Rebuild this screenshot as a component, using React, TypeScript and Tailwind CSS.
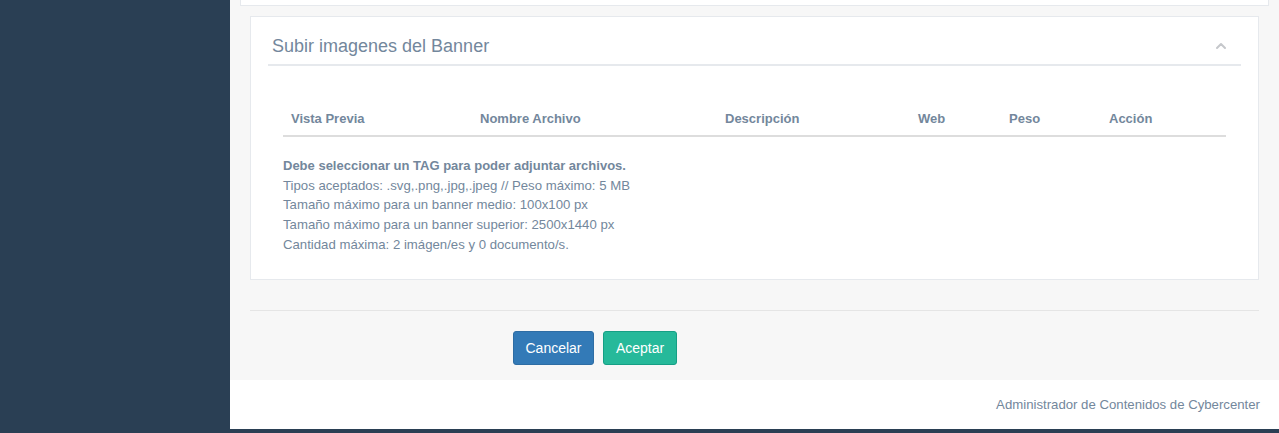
import { ChevronUp } from "lucide-react";

const columns = [
  { label: "Vista Previa", w: "w-[189px]" },
  { label: "Nombre Archivo", w: "w-[245px]" },
  { label: "Descripción", w: "w-[193px]" },
  { label: "Web", w: "w-[91px]" },
  { label: "Peso", w: "w-[100px]" },
  { label: "Acción", w: "w-[125px]" },
];

export default function App() {
  return (
    <div
      className="flex h-[433px] w-full bg-[#2A3F54] text-[#73879C]"
      style={{ fontFamily: '"Liberation Sans", Arial, sans-serif' }}
    >
      {/* sidebar */}
      <aside className="w-[230px] shrink-0" />

      <main className="flex h-[429px] flex-1 flex-col">
        <div className="h-[380px] bg-[#F7F7F7] pl-[10px] pr-[11px]">
          {/* tail of the card above */}
          <div className="h-[6px] border border-t-0 border-[#E6E9ED] bg-white" />

          <div className="px-[10px] pt-[10px]">
            <section className="h-[264px] border border-[#E6E9ED] bg-white px-[17px] pt-[10px]">
              <div className="flex h-[39px] items-center justify-between border-b-2 border-[#E6E9ED] pl-[4px] pr-[12px]">
                <h2 className="text-[18px] leading-[24px] text-[#73879C]">Subir imagenes del Banner</h2>
                <ChevronUp className="h-[16px] w-[16px] text-[#C5C7CB]" strokeWidth={3} />
              </div>

              <div className="px-[15px] pt-[36px]">
                <div className="flex h-[35px] items-center border-b-2 border-[#DDDDDD]">
                  {columns.map((c) => (
                    <div key={c.label} className={`${c.w} px-[8px] text-[13px] font-bold`}>
                      {c.label}
                    </div>
                  ))}
                </div>

                <div className="pt-[19px] text-[13.2px] leading-[19.7px]">
                  <p className="text-[13px] font-bold">Debe seleccionar un TAG para poder adjuntar archivos.</p>
                  <p>Tipos aceptados: .svg,.png,.jpg,.jpeg // Peso máximo: 5 MB</p>
                  <p>Tamaño máximo para un banner medio: 100x100 px</p>
                  <p>Tamaño máximo para un banner superior: 2500x1440 px</p>
                  <p>Cantidad máxima: 2 imágen/es y 0 documento/s.</p>
                </div>
              </div>
            </section>

            <div className="mt-[30px] border-t border-[#E5E5E5]" />

            <div className="flex gap-[9px] pl-[263px] pt-[20px]">
              <button className="h-[34px] w-[81px] rounded-[3px] border border-[#2E6DA4] bg-[#337AB7] text-[14px] text-white">
                Cancelar
              </button>
              <button className="h-[34px] w-[74px] rounded-[3px] border border-[#169F85] bg-[#26B99A] text-[14px] text-white">
                Aceptar
              </button>
            </div>
          </div>
        </div>

        <footer className="flex h-[49px] items-center justify-end bg-white pr-[20px] text-[13.2px]">
          Administrador de Contenidos de Cybercenter
        </footer>
      </main>
    </div>
  );
}
